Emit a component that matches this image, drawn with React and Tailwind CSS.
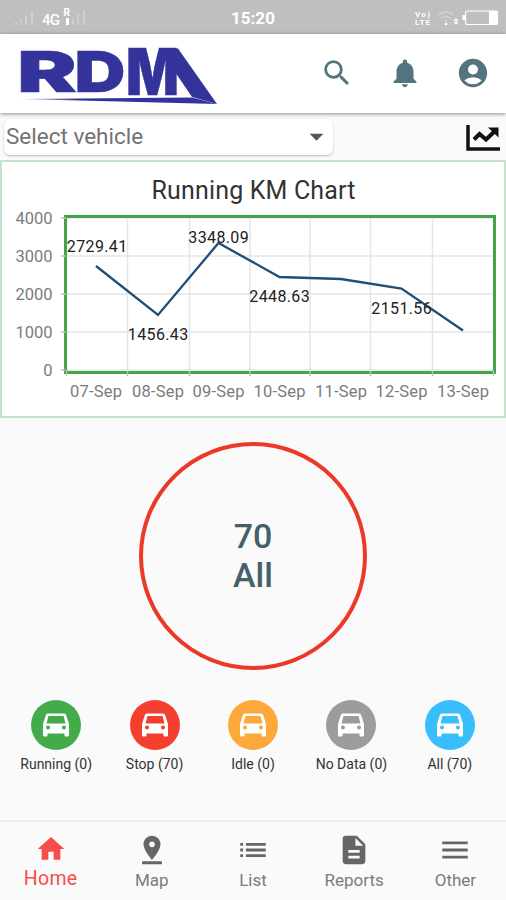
import { useState } from 'react';
import {
  MdSearch,
  MdNotifications,
  MdAccountCircle,
  MdArrowDropDown,
  MdHome,
  MdPinDrop,
  MdList,
  MdDescription,
  MdMenu,
} from 'react-icons/md';

const points = [
  { day: '07-Sep', x: 96, y: 106, label: '2729.41', labelX: 97, labelY: 92 },
  { day: '08-Sep', x: 158, y: 155, label: '1456.43', labelX: 158, labelY: 179.5 },
  { day: '09-Sep', x: 218.5, y: 83, label: '3348.09', labelX: 218.5, labelY: 83 },
  { day: '10-Sep', x: 279.5, y: 117, label: '2448.63', labelX: 279.5, labelY: 142 },
  { day: '11-Sep', x: 341, y: 119 },
  { day: '12-Sep', x: 401.5, y: 128.5, label: '2151.56', labelX: 401.5, labelY: 153.5 },
  { day: '13-Sep', x: 463, y: 170.5 },
];

const yTicks = [
  { value: 4000, y: 58 },
  { value: 3000, y: 96 },
  { value: 2000, y: 134 },
  { value: 1000, y: 172 },
  { value: 0, y: 210 },
];

const xTicks = [66.5, 127.5, 189.5, 250, 310, 370.5, 432.5, 493.5];

const vehicles = [
  { name: 'Running', count: 0, color: 'bg-[#43ab4a]' },
  { name: 'Stop', count: 70, color: 'bg-[#f43f2f]' },
  { name: 'Idle', count: 0, color: 'bg-[#fda83b]' },
  { name: 'No Data', count: 0, color: 'bg-[#9c9c9c]' },
  { name: 'All', count: 70, color: 'bg-[#38bffb]' },
];

const tabs = [
  { name: 'Home', Icon: MdHome },
  { name: 'Map', Icon: MdPinDrop },
  { name: 'List', Icon: MdList },
  { name: 'Reports', Icon: MdDescription },
  { name: 'Other', Icon: MdMenu },
];

const StatusBar = () => (
  <div className="grid grid-cols-3 items-center h-[34px] shrink-0 bg-[#bfbfbf] text-white">
    <svg width="90" height="34" viewBox="0 0 90 34" fill="#fff">
      <g opacity="0.25">
        <path d="M15 22h2v3h-2zM20 19h2v6h-2zM25 16h2v9h-2zM31 12h2v13h-2z" />
        <path d="M72 19h2v6h-2zM77 14h2v11h-2zM83 10h2v15h-2z" />
      </g>
      <text x="42" y="25" fontSize="15" fontWeight="500" textLength="18">4G</text>
      <text x="63.500" y="15.500" fontSize="10" fontWeight="700">R</text>
      <rect x="66" y="18" width="3" height="7" />
    </svg>
    <div className="text-center text-[17px] font-bold pt-1">15:20</div>
    <svg className="justify-self-end" width="100" height="34" viewBox="0 0 100 34" fill="#fff">
      <text x="9" y="16.500" fontSize="8" fontWeight="700" textLength="15">Vo)</text>
      <text x="9" y="25" fontSize="8" fontWeight="700" textLength="15">LTE</text>
      <g fill="none" stroke="#fff" strokeWidth="1.500" opacity="0.3">
        <path d="M32 15q8-6 16 0M35 18.500q5-4 10 0M38 21.500q2-2 4 0" />
      </g>
      <circle cx="40" cy="24" r="1.300" />
      <path d="M47.500 21l2.500-3 2.500 3zM47.500 22h5l-2.500 3z" />
      <rect x="59.500" y="11" width="32" height="13.500" rx="2" fill="none" stroke="#fff" strokeWidth="1.200" />
      <rect x="83" y="11" width="8.500" height="13" />
      <path d="M56.500 15h2.500v5h-2.500z" />
    </svg>
  </div>
);

const Logo = () => (
  <svg className="ml-5 overflow-visible" width="198" height="58" viewBox="20 47 198 58" fill="#33339b">
    <defs>
      <linearGradient id="tail" x1="0" x2="1" y1="0" y2="0">
        <stop offset="0" stopColor="#33339b" stopOpacity="0.3" />
        <stop offset="0.3" stopColor="#33339b" />
      </linearGradient>
    </defs>
    <g fontFamily="Inter, sans-serif" fontWeight="900" stroke="#33339b" strokeWidth="0.5">
      <text fontSize="57" transform="translate(17 94)" textLength="60" lengthAdjust="spacingAndGlyphs">R</text>
      <text fontSize="57" transform="translate(74.500 94)" textLength="51" lengthAdjust="spacingAndGlyphs">D</text>
      <text fontSize="64" transform="translate(126 97)" textLength="53" lengthAdjust="spacingAndGlyphs">M</text>
    </g>
    {/* slanted leg and the sweep running under the name */}
    <path d="M176 50.500h2L217 106L192 99L175 74z" />
    <path d="M20 101L192 99.500L217 106z" fill="url(#tail)" />
  </svg>
);

const CarIcon = () => (
  <svg width="26" height="24" viewBox="0 0 26 24" fill="currentColor" fillRule="evenodd">
    <path d="M5 0.500h16q1.800 0 2.300 2L26 11v11.500q0 1-1 1h-2.500q-1 0-1-1V20.500h-17v2q0 1-1 1H1q-1 0-1-1V11l2.700-8.500q.5-2 2.300-2zM5.500 3L3.500 10.500h19L20.500 3zM5 12.500a2 2 0 1 0 .01 0zM21 12.500a2 2 0 1 0 .01 0z" />
  </svg>
);

const Header = () => (
  <header className="relative flex items-center h-[79px] shrink-0 bg-white shadow-[0_1px_4px_rgba(0,0,0,0.45)]">
    <Logo />
    <div className="flex items-center gap-[34px] ml-auto pr-4 pb-0.5 text-[#52747f]">
      <MdSearch size={34} />
      <MdNotifications size={34} />
      <MdAccountCircle size={34} />
    </div>
  </header>
);

const KmChart = () => (
  <section className="h-[258px] shrink-0 bg-white border-2 border-[#c6e3c9]">
    <svg className="-m-[2px]" width="506" height="258" viewBox="0 0 506 258">
      <text x="253.500" y="38.500" textAnchor="middle" fontSize="25" fill="#333" textLength="204">Running KM Chart</text>
      <g stroke="#e5e5e5" strokeWidth="1.500">
        {yTicks.map((t) => <line key={t.value} x1="66" x2="494" y1={t.y} y2={t.y} />)}
        {xTicks.map((x) => <line key={x} x1={x} x2={x} y1="56" y2="212" />)}
      </g>
      <rect x="65.500" y="56.500" width="429" height="156" fill="none" stroke="#43a547" strokeWidth="3" />
      <g stroke="#b5c4b5" strokeWidth="1.500">
        {yTicks.map((t) => <line key={t.value} x1="61" x2="66" y1={t.y} y2={t.y} />)}
        {xTicks.map((x) => <line key={x} x1={x} x2={x} y1="211" y2="216" />)}
      </g>
      <g fontSize="16.500" fill="#7b7b7b">
        {yTicks.map((t) => (
          <text key={t.value} x="52.500" y={t.y + 6} textAnchor="end">{t.value}</text>
        ))}
        {points.map((p) => (
          <text key={p.day} x={p.x} y="237" textAnchor="middle" textLength="52">{p.day}</text>
        ))}
      </g>
      <polyline
        points={points.map((p) => `${p.x},${p.y}`).join(' ')}
        fill="none"
        stroke="#1d4f78"
        strokeWidth="2.300"
      />
      <g fontSize="16" fill="#222">
        {points.filter((p) => p.label).map((p) => (
          <text key={p.day} x={p.labelX} y={p.labelY} textAnchor="middle" textLength="60.500">{p.label}</text>
        ))}
      </g>
    </svg>
  </section>
);

const App = () => {
  const [active, setActive] = useState('Home');

  return (
    <div className="flex flex-col w-[506px] h-[900px] overflow-hidden bg-[#fafafa] font-[Roboto,sans-serif]">
      <StatusBar />
      <Header />

      <div className="flex items-center justify-between h-[47px] shrink-0 pl-1 pr-[5px]">
        <button className="flex items-center justify-between w-[329px] h-9 pl-0.5 bg-white rounded-md shadow-[0_1px_2px_rgba(0,0,0,0.25)] text-[22.5px] text-[#737373]">
          Select vehicle
          <MdArrowDropDown size={33} className="text-[#555]" />
        </button>
        <svg className="mt-0.5" width="35" height="28" viewBox="0 0 35 28" fill="none" stroke="#111" strokeWidth="3.500">
          <path d="M2 1v24h32" />
          <path d="M8 15.500l5.500-5.500 6.500 5.500 9-8.500" strokeWidth="4" />
          <path d="M22 3.500h10.500v10z" fill="#111" stroke="none" />
        </svg>
      </div>

      <KmChart />

      <div className="flex flex-col items-center justify-center w-[228px] h-[228px] mx-auto mt-[23.5px] shrink-0 rounded-full border-4 border-[#ec3826] text-[34px] leading-[39px] font-medium text-[#456069]">
        <span>70</span>
        <span>All</span>
      </div>

      <div className="grid grid-cols-5 px-[7px] mt-[30px]">
        {vehicles.map((v) => (
          <div key={v.name} className="flex flex-col items-center">
            <div className={`flex items-center justify-center w-[50px] h-[50px] rounded-full text-white ${v.color}`}>
              <CarIcon />
            </div>
            <span className="mt-1 text-[14px] leading-5 text-[#333]">{v.name} ({v.count})</span>
          </div>
        ))}
      </div>

      <nav className="grid grid-cols-5 h-20 mt-auto shrink-0 border-t-2 border-[#eeeeee]">
        {tabs.map(({ name, Icon }) => (
          <button
            key={name}
            onClick={() => setActive(name)}
            className={`flex flex-col items-center pt-[11px] ${
              active === name ? 'text-[#f84c4c]' : 'text-[#666]'
            }`}
          >
            <Icon size={active === name ? 32 : 34} />
            <span
              className={
                active === name
                  ? 'mt-0.5 text-[19.5px] leading-6 tracking-[0.3px]'
                  : 'mt-px text-[17px] leading-6 text-[#7b7b7b]'
              }
            >
              {name}
            </span>
          </button>
        ))}
      </nav>
    </div>
  );
};

export default App;
